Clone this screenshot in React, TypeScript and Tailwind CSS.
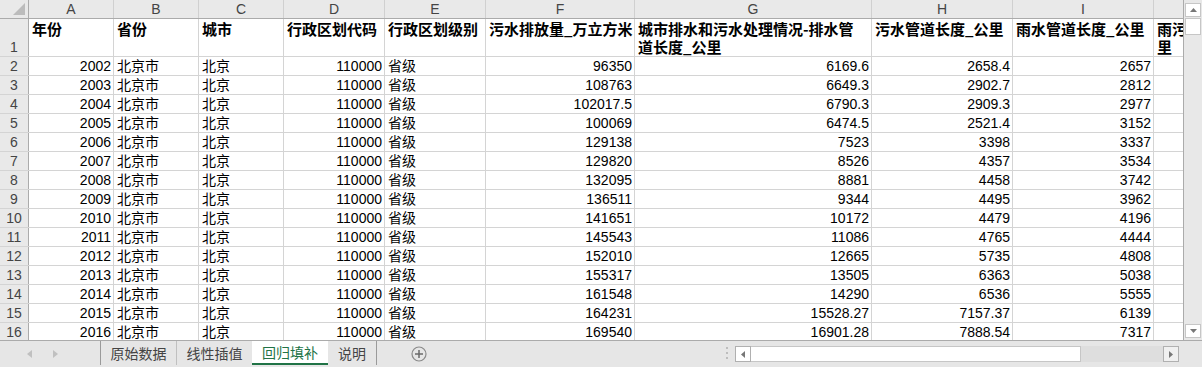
import React from "react";

const cols = [
  { l: "A", w: 85 },
  { l: "B", w: 85 },
  { l: "C", w: 85 },
  { l: "D", w: 101 },
  { l: "E", w: 101 },
  { l: "F", w: 149 },
  { l: "G", w: 237 },
  { l: "H", w: 141 },
  { l: "I", w: 141 },
  { l: "J", w: 141 },
];

const headers: string[][] = [
  ["年份"],
  ["省份"],
  ["城市"],
  ["行政区划代码"],
  ["行政区划级别"],
  ["污水排放量_万立方米"],
  ["城市排水和污水处理情况-排水管", "道长度_公里"],
  ["污水管道长度_公里"],
  ["雨水管道长度_公里"],
  ["雨污合流管道长度_公", "里"],
];

const data: [string, string, string, string, string][] = [
  ["2002", "96350", "6169.6", "2658.4", "2657"],
  ["2003", "108763", "6649.3", "2902.7", "2812"],
  ["2004", "102017.5", "6790.3", "2909.3", "2977"],
  ["2005", "100069", "6474.5", "2521.4", "3152"],
  ["2006", "129138", "7523", "3398", "3337"],
  ["2007", "129820", "8526", "4357", "3534"],
  ["2008", "132095", "8881", "4458", "3742"],
  ["2009", "136511", "9344", "4495", "3962"],
  ["2010", "141651", "10172", "4479", "4196"],
  ["2011", "145543", "11086", "4765", "4444"],
  ["2012", "152010", "12665", "5735", "4808"],
  ["2013", "155317", "13505", "6363", "5038"],
  ["2014", "161548", "14290", "6536", "5555"],
  ["2015", "164231", "15528.27", "7157.37", "6139"],
  ["2016", "169540", "16901.28", "7888.54", "7317"],
];

const font = {
  fontFamily: '"Liberation Sans", "Noto Sans CJK SC", sans-serif',
};
const cjk = { fontFamily: '"Noto Sans CJK SC", sans-serif' };

function Cell({
  w,
  children,
  right,
}: {
  w: number;
  children?: React.ReactNode;
  right?: boolean;
}) {
  return (
    <div
      className={
        "shrink-0 h-full border-r border-[#d4d4d4] flex items-end overflow-hidden whitespace-nowrap leading-[18px] " +
        (right ? "justify-end pr-[2px]" : "justify-start pl-[3px]")
      }
      style={{ width: w }}
    >
      {children}
    </div>
  );
}

export default function App() {
  return (
    <div
      className="w-[1202px] h-[367px] bg-white overflow-hidden text-[14px] text-black flex flex-col"
      style={font}
    >
      <div className="flex h-[340px] shrink-0">
        {/* grid */}
        <div className="w-[1183px] h-[340px] overflow-hidden flex flex-col">
          {/* column letters */}
          <div className="flex h-[19px] shrink-0 bg-[#e9e9e9] border-b border-[#ababab]">
            <div className="w-[29px] shrink-0 h-full border-r border-[#ababab] relative">
              <svg
                className="absolute right-[3px] bottom-[3px]"
                width="12"
                height="12"
                viewBox="0 0 12 12"
              >
                <polygon points="12,0 12,12 0,12" fill="#bcbcbc" />
              </svg>
            </div>
            {cols.map((c) => (
              <div
                key={c.l}
                className="shrink-0 h-full border-r border-[#d0d0d0] flex items-center justify-center text-[#444] leading-[18px]"
                style={{ width: c.w }}
              >
                {c.l}
              </div>
            ))}
          </div>
          {/* row 1 */}
          <div className="flex h-[38px] shrink-0 border-b border-[#d4d4d4]">
            <div className="w-[29px] shrink-0 h-full bg-[#e9e9e9] border-r border-[#ababab] flex items-end justify-center text-[#444] leading-[18px]">
              1
            </div>
            {cols.map((c, i) => (
              <div
                key={c.l}
                className="shrink-0 h-full border-r border-[#d4d4d4] pl-[3px] pt-[1px] leading-[18px] overflow-hidden whitespace-nowrap font-bold text-[15px]"
                style={{ width: c.w, ...cjk }}
              >
                {headers[i].map((t, k) => (
                  <div key={k}>{t}</div>
                ))}
              </div>
            ))}
          </div>
          {data.map((r, idx) => (
            <div
              key={r[0]}
              className="flex h-[19px] shrink-0 border-b border-[#d4d4d4]"
            >
              <div className="w-[29px] shrink-0 h-full bg-[#e9e9e9] border-r border-[#ababab] flex items-end justify-center text-[#444] leading-[18px]">
                {idx + 2}
              </div>
              <Cell w={85} right>
                {r[0]}
              </Cell>
              <Cell w={85}>北京市</Cell>
              <Cell w={85}>北京</Cell>
              <Cell w={101} right>
                110000
              </Cell>
              <Cell w={101}>省级</Cell>
              <Cell w={149} right>
                {r[1]}
              </Cell>
              <Cell w={237} right>
                {r[2]}
              </Cell>
              <Cell w={141} right>
                {r[3]}
              </Cell>
              <Cell w={141} right>
                {r[4]}
              </Cell>
              <Cell w={141} />
            </div>
          ))}
        </div>
        {/* vertical scrollbar */}
        <div className="w-[19px] h-[340px] bg-[#e8e8e8] border-l border-[#ababab] flex flex-col items-center pt-[3px] pb-[2px]">
          <div className="w-[16px] h-[14px] bg-white border border-[#c6c6c6] flex items-center justify-center">
            <svg width="7" height="4" viewBox="0 0 7 4">
              <polygon points="3.5,0 7,4 0,4" fill="#777" />
            </svg>
          </div>
          <div className="w-[16px] h-[17px] bg-white border border-[#c6c6c6] mt-[1px]" />
          <div className="flex-1" />
          <div className="w-[16px] h-[14px] bg-white border border-[#c6c6c6] flex items-center justify-center">
            <svg width="7" height="4" viewBox="0 0 7 4">
              <polygon points="0,0 7,0 3.5,4" fill="#777" />
            </svg>
          </div>
        </div>
      </div>
      {/* tab bar */}
      <div className="flex h-[27px] shrink-0 bg-[#e6e6e6] border-t border-[#ababab] text-[#444]">
        <div className="w-[100px] shrink-0 flex items-center pl-[27px] gap-[21px]">
          <svg width="5" height="8" viewBox="0 0 5 8">
            <polygon points="5,0 5,8 0,4" fill="#c0c0c0" />
          </svg>
          <svg width="5" height="8" viewBox="0 0 5 8">
            <polygon points="0,0 5,4 0,8" fill="#c0c0c0" />
          </svg>
        </div>
        <div className="flex h-[24px] border-l border-[#9a9a9a]" style={cjk}>
          <div className="w-[76px] flex items-center justify-center border-r border-[#c0c0c0] leading-[18px]">
            原始数据
          </div>
          <div className="w-[75px] flex items-center justify-center leading-[18px]">
            线性插值
          </div>
          <div className="w-[76px] flex items-center justify-center bg-white text-[#217346] border-b-2 border-[#217346] leading-[18px]">
            回归填补
          </div>
          <div className="w-[49px] flex items-center justify-center border-r border-[#9a9a9a] leading-[18px]">
            说明
          </div>
        </div>
        <div className="w-[341px] shrink-0 flex items-center pl-[34px] pb-[1px]">
          <svg width="16" height="16" viewBox="0 0 16 16">
            <circle cx="8" cy="8" r="7" fill="none" stroke="#8a8a8a" strokeWidth="1.2" />
            <line x1="8" y1="4" x2="8" y2="12" stroke="#6a6a6a" strokeWidth="1.5" />
            <line x1="4" y1="8" x2="12" y2="8" stroke="#6a6a6a" strokeWidth="1.5" />
          </svg>
        </div>
        <div className="w-[17px] shrink-0 flex flex-col items-center justify-center gap-[3px] pb-[2px]">
          <div className="w-[2px] h-[2px] bg-[#bdbdbd]" />
          <div className="w-[2px] h-[2px] bg-[#bdbdbd]" />
          <div className="w-[2px] h-[2px] bg-[#bdbdbd]" />
        </div>
        <div className="w-[444px] shrink-0 flex items-start pt-[5px]">
          <div className="flex w-full h-[16px]">
            <div className="w-[16px] h-[16px] bg-white border border-[#b0b0b0] flex items-center justify-center">
              <svg width="4" height="7" viewBox="0 0 4 7">
                <polygon points="4,0 4,7 0,3.5" fill="#777" />
              </svg>
            </div>
            <div className="w-[330px] h-[16px] bg-white border border-[#c6c6c6] border-l-0" />
            <div className="flex-1 h-[16px] bg-[#dedede]" />
            <div className="w-[16px] h-[16px] bg-[#f0f0f0] border border-[#b0b0b0] flex items-center justify-center">
              <svg width="4" height="7" viewBox="0 0 4 7">
                <polygon points="0,0 4,3.5 0,7" fill="#777" />
              </svg>
            </div>
          </div>
        </div>
      </div>
    </div>
  );
}
